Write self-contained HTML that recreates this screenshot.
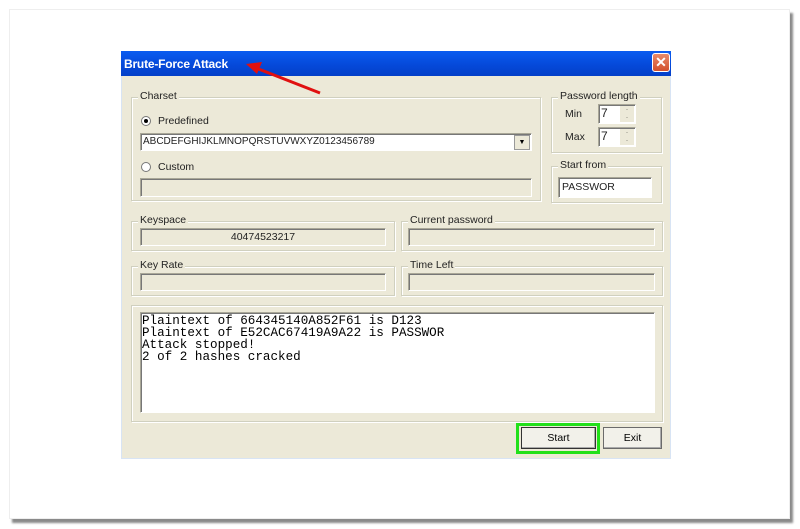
<!DOCTYPE html>
<html><head><meta charset="utf-8"><style>
*{margin:0;padding:0;box-sizing:border-box}
body{width:800px;height:529px;background:#fff;position:relative;overflow:hidden;font-family:"Liberation Sans",sans-serif;font-size:10.5px;color:#000}
.a{position:absolute}
.card{left:9px;top:9px;width:781px;height:510px;background:#fff;border:1px solid #eee;box-shadow:3px 4px 2px #8a8a8a}
.dlg{left:121px;top:51px;width:550px;height:408px;background:#ece9d8;border:1px solid #d8e4f4}
.title{left:121px;top:51px;width:550px;height:25px;background:linear-gradient(#0a5cf0,#0548d8 60%,#0440c8);color:#fff;font-weight:bold;font-size:12px;padding:6px 0 0 3px;letter-spacing:-0.2px}
.close{left:652px;top:53px;width:18px;height:19px;background:linear-gradient(#e88a6a,#d2502c);border:1px solid #fff;border-radius:3px;color:#fff;font-size:14px;line-height:16px;text-align:center;font-weight:bold}
.grp{border:1px solid #d0d0bf;box-shadow:inset 1px 1px 0 #fff,1px 1px 0 #fff}
.lbl{background:#ece9d8;padding:0 2px;font-size:10.5px;color:#222;top:-8px;left:6px;position:absolute}
.fld{border:1px solid #a9a797;border-right-color:#fff;border-bottom-color:#fff;box-shadow:inset 1px 1px 0 #777;background:#ece9d8}
.wh{background:#fff}
.txt{font-size:10.5px;color:#222}
.rad{width:10px;height:10px;border-radius:50%;border:1px solid #777;background:#fff}
.btn{border:1px solid #6b6b6b;background:#f2f1ea;text-align:center;line-height:20px;font-size:10.5px;box-shadow:inset -1px -1px 0 #aaa}
.mono{font-family:"Liberation Mono",monospace;font-size:12.6px;line-height:12px}
</style></head><body>
<div class="a card"></div>
<div class="a dlg"></div>
<div class="a title">Brute-Force Attack</div>
<div class="a close">✕</div>

<div class="a grp" style="left:131px;top:97px;width:410px;height:104px"><span class="lbl">Charset</span></div>
<div class="a rad" style="left:141px;top:116px"></div><div class="a" style="left:144px;top:119px;width:4px;height:4px;background:#000;border-radius:50%"></div>
<div class="a txt" style="left:158px;top:115px">Predefined</div>
<div class="a fld wh" style="left:140px;top:133px;width:392px;height:18px"></div>
<div class="a txt" style="left:143px;top:136px;font-size:10px">ABCDEFGHIJKLMNOPQRSTUVWXYZ0123456789</div>
<div class="a" style="left:514px;top:135px;width:16px;height:15px;background:#ece9d8;border:1px solid #999;font-size:7px;text-align:center;line-height:13px">▼</div>
<div class="a rad" style="left:141px;top:162px"></div>
<div class="a txt" style="left:158px;top:161px">Custom</div>
<div class="a fld" style="left:140px;top:178px;width:392px;height:19px"></div>

<div class="a grp" style="left:551px;top:97px;width:111px;height:56px"><span class="lbl">Password length</span></div>
<div class="a txt" style="left:565px;top:108px">Min</div>
<div class="a fld wh" style="left:598px;top:104px;width:38px;height:20px"></div>
<div class="a txt" style="left:601px;top:106px;font-size:12px">7</div>
<div class="a" style="left:620px;top:106px;width:14px;height:16px;background:#ece9d8;font-size:6px;text-align:center;line-height:8px">·<br>·</div>
<div class="a txt" style="left:565px;top:131px">Max</div>
<div class="a fld wh" style="left:598px;top:127px;width:38px;height:20px"></div>
<div class="a txt" style="left:601px;top:129px;font-size:12px">7</div>
<div class="a" style="left:620px;top:129px;width:14px;height:16px;background:#ece9d8;font-size:6px;text-align:center;line-height:8px">·<br>·</div>

<div class="a grp" style="left:551px;top:166px;width:111px;height:37px"><span class="lbl">Start from</span></div>
<div class="a fld wh" style="left:558px;top:177px;width:94px;height:21px"></div>
<div class="a txt" style="left:562px;top:181px">PASSWOR</div>

<div class="a grp" style="left:131px;top:221px;width:264px;height:30px"><span class="lbl">Keyspace</span></div>
<div class="a fld" style="left:140px;top:228px;width:246px;height:18px"></div>
<div class="a txt" style="left:140px;top:231px;width:246px;text-align:center">40474523217</div>
<div class="a grp" style="left:401px;top:221px;width:262px;height:30px"><span class="lbl">Current password</span></div>
<div class="a fld" style="left:408px;top:228px;width:247px;height:18px"></div>

<div class="a grp" style="left:131px;top:266px;width:264px;height:30px"><span class="lbl">Key Rate</span></div>
<div class="a fld" style="left:140px;top:273px;width:246px;height:18px"></div>
<div class="a grp" style="left:401px;top:266px;width:262px;height:30px"><span class="lbl">Time Left</span></div>
<div class="a fld" style="left:408px;top:273px;width:247px;height:18px"></div>

<div class="a grp" style="left:131px;top:305px;width:532px;height:117px"></div>
<div class="a fld wh" style="left:140px;top:312px;width:515px;height:101px"></div>
<div class="a mono" style="left:142px;top:315px">Plaintext of 664345140A852F61 is D123<br>Plaintext of E52CAC67419A9A22 is PASSWOR<br>Attack stopped!<br>2 of 2 hashes cracked</div>

<div class="a" style="left:516px;top:423px;width:84px;height:31px;border:3px solid #22e01a"></div>
<div class="a btn" style="left:521px;top:427px;width:75px;height:22px;border-color:#333">Start</div>
<div class="a btn" style="left:603px;top:427px;width:59px;height:22px">Exit</div>

<svg class="a" style="left:240px;top:58px" width="90" height="40"><line x1="80" y1="35" x2="16" y2="10" stroke="#e01010" stroke-width="3"/><polygon points="6,6 22,4 17,16" fill="#e01010"/></svg>
</body></html>
